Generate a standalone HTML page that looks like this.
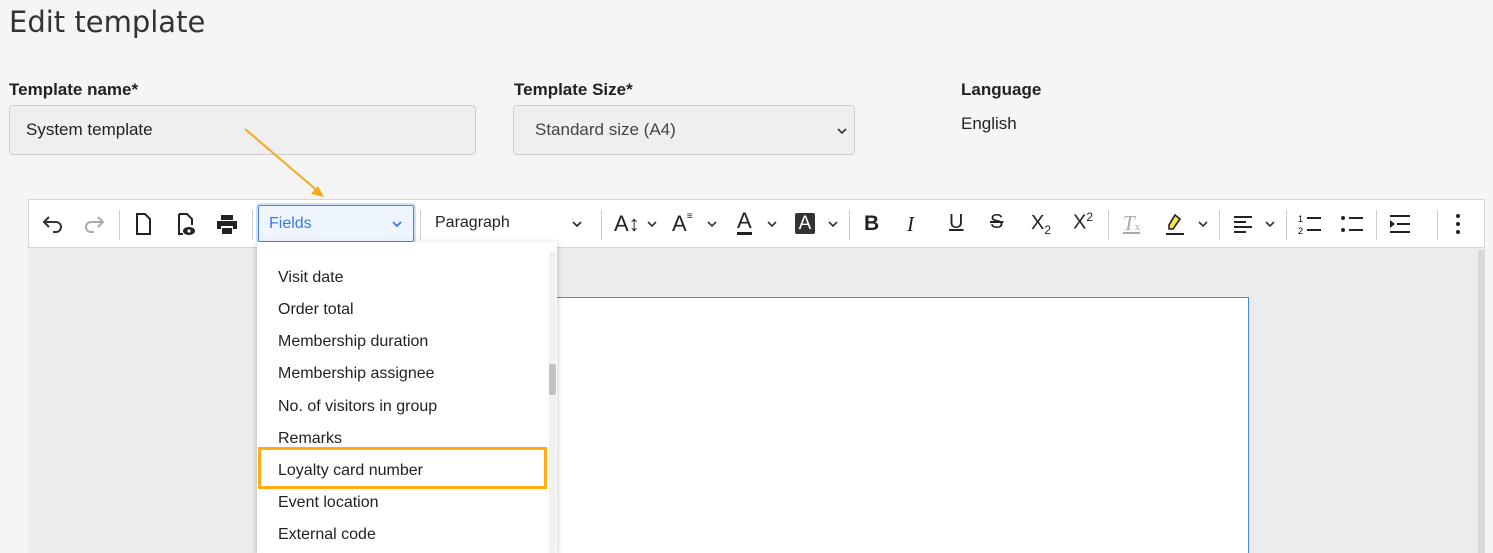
<!DOCTYPE html>
<html><head><meta charset="utf-8"><style>
*{box-sizing:border-box;margin:0;padding:0}
html{width:1493px;height:553px;overflow:hidden}
body{width:1493px;height:553px;background:#f5f5f5;font-family:"Liberation Sans",Arial,sans-serif;position:relative;overflow:hidden;color:#222}
.abs{position:absolute}
h1{position:absolute;left:9px;top:5px;font-size:29px;font-weight:normal;color:#333;font-family:"DejaVu Sans",sans-serif}
.lbl{position:absolute;font-size:17px;font-weight:bold;color:#222}
.inp{position:absolute;background:#efefef;border:1px solid #ccc;border-radius:4px;font-size:17px;padding-left:16px;line-height:48px;color:#222}
.tb{position:absolute;left:28px;top:199px;width:1457px;height:49px;background:#fff;border:1px solid #d6d6d6}
.sep{position:absolute;top:10px;width:1px;height:30px;background:#ccc}
.ic{position:absolute;top:12px}
.dd{position:absolute;left:257px;top:242px;width:300px;height:311px;background:#fff;box-shadow:0 2px 6px rgba(0,0,0,.25)}
.it{position:absolute;left:21px;font-size:16px;color:#222}
</style></head><body>
<h1>Edit template</h1>
<div class="lbl" style="left:9px;top:80px">Template name*</div>
<div class="lbl" style="left:514px;top:80px">Template Size*</div>
<div class="lbl" style="left:961px;top:80px">Language</div>
<div class="abs" style="left:961px;top:114px;font-size:17px">English</div>
<div class="inp" style="left:9px;top:105px;width:467px;height:50px">System template</div>
<div class="inp" style="left:513px;top:105px;width:342px;height:50px;padding-left:21px;color:#444">Standard size (A4)<svg class="abs" style="right:6px;top:20px" width="12" height="10"><path d="M2 3l4 4 4-4" stroke="#333" stroke-width="1.6" fill="none"/></svg></div>

<div class="abs" style="left:28px;top:248px;width:1457px;height:305px;background:#ececec"></div>
<div class="abs" style="left:1478px;top:250px;width:7px;height:303px;background:#d8d8d8"></div>
<div class="abs" style="left:480px;top:297px;width:769px;height:260px;background:#fff;border:1px solid #4a86e8;border-left:none;border-bottom:none"></div>

<div class="tb">
<svg class="ic" style="left:12px" width="24" height="24"><path d="M8 6L3 11l5 5M3 11h12a5 5 0 010 10h-3" stroke="#333" stroke-width="2" fill="none" transform="translate(0,-1)"/></svg>
<svg class="ic" style="left:53px" width="24" height="24"><path d="M16 6l5 5-5 5M21 11H9a5 5 0 000 10h3" stroke="#aaa" stroke-width="2" fill="none" transform="translate(0,-1)"/></svg>
<div class="sep" style="left:90px"></div>
<svg class="ic" style="left:102px" width="24" height="24"><path d="M6 2h8l5 5v15H6z" stroke="#222" stroke-width="2" fill="none"/></svg>
<svg class="ic" style="left:144px" width="26" height="26"><path d="M6 2h8l5 5v6M10 22H6V2" stroke="#222" stroke-width="2" fill="none"/><ellipse cx="16" cy="19" rx="6" ry="4" fill="#222"/><circle cx="16" cy="19" r="1.6" fill="#fff"/></svg>
<svg class="ic" style="left:186px" width="24" height="24"><path d="M6 3h12v5H6z M2 9h20v8h-4v-3H6v3H2z M7 16h10v6H7z" fill="#222"/></svg>
<div class="sep" style="left:223px"></div>
<div class="abs" style="left:229px;top:5px;width:156px;height:37px;border:1px solid #4a86e8;background:#eef5ff;border-radius:2px;box-shadow:0 0 0 2px #cfe0fb;color:#3b7be0;font-size:16px;line-height:35px;padding-left:10px">Fields<svg class="abs" style="right:10px;top:13px" width="12" height="10"><path d="M2 3l4 4 4-4" stroke="#3b7be0" stroke-width="1.8" fill="none"/></svg></div>
<div class="sep" style="left:391px"></div>
<div class="abs" style="left:406px;top:14px;font-size:16px;color:#222">Paragraph</div>
<svg class="abs" style="left:542px;top:19px" width="12" height="10"><path d="M2 3l4 4 4-4" stroke="#333" stroke-width="1.8" fill="none"/></svg>
<div class="sep" style="left:572px"></div>
<div class="abs" style="left:585px;top:11px;font-size:22px;color:#222">A↕</div><svg class="abs" style="left:617px;top:19px" width="12" height="10"><path d="M2 3l4 4 4-4" stroke="#333" stroke-width="1.6" fill="none"/></svg>
<div class="abs" style="left:643px;top:11px;font-size:22px;color:#222">A<span style="font-size:10px;vertical-align:top">≡</span></div><svg class="abs" style="left:677px;top:19px" width="12" height="10"><path d="M2 3l4 4 4-4" stroke="#333" stroke-width="1.6" fill="none"/></svg>
<div class="abs" style="left:708px;top:10px;font-size:22px;color:#222;border-bottom:3px solid #222;line-height:22px">A</div><svg class="abs" style="left:737px;top:19px" width="12" height="10"><path d="M2 3l4 4 4-4" stroke="#333" stroke-width="1.6" fill="none"/></svg>
<div class="abs" style="left:766px;top:13px;width:20px;height:21px;background:#333;color:#fff;font-size:19px;text-align:center;line-height:21px;border-radius:2px">A</div><svg class="abs" style="left:798px;top:19px" width="12" height="10"><path d="M2 3l4 4 4-4" stroke="#333" stroke-width="1.6" fill="none"/></svg>
<div class="sep" style="left:820px"></div>
<div class="abs" style="left:835px;top:12px;font-size:21px;font-weight:bold">B</div>
<div class="abs" style="left:878px;top:12px;font-size:21px;font-style:italic;font-family:'Liberation Serif',serif">I</div>
<div class="abs" style="left:920px;top:11px;font-size:20px;text-decoration:underline">U</div>
<div class="abs" style="left:961px;top:11px;font-size:20px;text-decoration:line-through">S</div>
<div class="abs" style="left:1002px;top:12px;font-size:20px">X<sub style="font-size:12px">2</sub></div>
<div class="abs" style="left:1044px;top:10px;font-size:20px">X<sup style="font-size:12px">2</sup></div>
<div class="sep" style="left:1079px"></div>
<div class="abs" style="left:1094px;top:11px;font-size:21px;color:#aaa;font-style:italic;font-family:'Liberation Serif',serif;text-decoration:underline">T<span style="font-size:11px;font-style:normal">x</span></div>
<svg class="ic" style="left:1134px" width="26" height="26"><path d="M12 3l5 4-7 10H6v-4z" fill="#f5e44a" stroke="#222" stroke-width="1.6"/><path d="M3 22h18" stroke="#222" stroke-width="2"/></svg><svg class="abs" style="left:1168px;top:19px" width="12" height="10"><path d="M2 3l4 4 4-4" stroke="#333" stroke-width="1.6" fill="none"/></svg>
<div class="sep" style="left:1190px"></div>
<svg class="ic" style="left:1202px" width="24" height="24"><path d="M3 5h18M3 10h12M3 15h18M3 20h12" stroke="#222" stroke-width="2"/></svg><svg class="abs" style="left:1235px;top:19px" width="12" height="10"><path d="M2 3l4 4 4-4" stroke="#333" stroke-width="1.6" fill="none"/></svg>
<div class="sep" style="left:1257px"></div>
<svg class="ic" style="left:1268px" width="26" height="24"><path d="M10 6h14M10 18h14" stroke="#222" stroke-width="2"/><text x="1" y="10" font-size="9" font-family="Liberation Sans">1</text><text x="1" y="22" font-size="9" font-family="Liberation Sans">2</text></svg>
<svg class="ic" style="left:1310px" width="26" height="24"><path d="M10 6h14M10 18h14" stroke="#222" stroke-width="2"/><circle cx="4" cy="6" r="2" fill="#222"/><circle cx="4" cy="18" r="2" fill="#222"/></svg>
<div class="sep" style="left:1347px"></div>
<svg class="ic" style="left:1358px" width="26" height="24"><path d="M3 4h20M10 12h13M3 20h20" stroke="#222" stroke-width="2"/><path d="M3 8l5 4-5 4z" fill="#222"/></svg>
<div class="sep" style="left:1408px"></div>
<svg class="ic" style="left:1425px" width="8" height="24"><circle cx="4" cy="4" r="2" fill="#222"/><circle cx="4" cy="12" r="2" fill="#222"/><circle cx="4" cy="20" r="2" fill="#222"/></svg>
</div>

<div class="dd">
<div class="it" style="top:27px">Visit date</div>
<div class="it" style="top:59px">Order total</div>
<div class="it" style="top:91px">Membership duration</div>
<div class="it" style="top:123px">Membership assignee</div>
<div class="it" style="top:156px">No. of visitors in group</div>
<div class="it" style="top:188px">Remarks</div>
<div class="abs" style="left:1px;top:205px;width:289px;height:42px;border:3px solid #ffad14"></div>
<div class="it" style="top:220px">Loyalty card number</div>
<div class="it" style="top:252px">Event location</div>
<div class="it" style="top:284px">External code</div>
<div class="abs" style="left:292px;top:10px;width:7px;height:301px;background:#f1f1f1"></div>
<div class="abs" style="left:292px;top:122px;width:7px;height:31px;background:#c1c1c1;border-radius:2px"></div>
</div>

<svg class="abs" style="left:240px;top:125px" width="90" height="75"><path d="M5 4L80 68" stroke="#f7a81b" stroke-width="2"/><path d="M84 72l-13-3 7-8z" fill="#f7a81b"/></svg>
</body></html>
